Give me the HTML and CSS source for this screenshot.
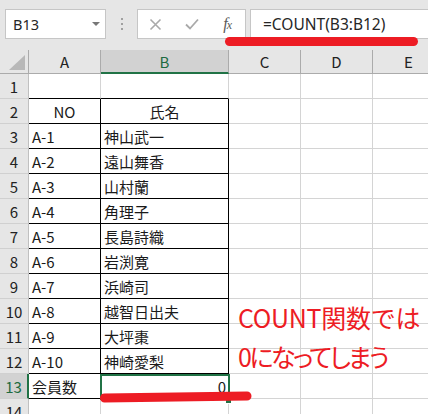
FILE: index.html
```html
<!DOCTYPE html>
<html lang="ja">
<head>
<meta charset="utf-8">
<title>COUNT</title>
<link rel="stylesheet" href="styles.css">
</head>
<body>
<div class="toolbar">
  <div class="namebox"><span>B13</span><span class="caret"></span></div>
  <div class="sep"><i></i><i></i><i></i></div>
  <div class="btns">
    <div class="slot"><svg width="13" height="13" viewBox="0 0 13 13"><path d="M1.5 1.5 L11.5 11.5 M11.5 1.5 L1.5 11.5" stroke="#a9a9a9" stroke-width="1.6" fill="none"/></svg></div>
    <div class="slot"><svg width="14" height="12" viewBox="0 0 14 12"><path d="M1 6.5 L5 10.5 L13 1.5" stroke="#a9a9a9" stroke-width="1.8" fill="none"/></svg></div>
    <div class="slot fx">f<span>x</span></div>
  </div>
  <div class="fbox">=COUNT(B3:B12)</div>
</div>
<div class="redbar"></div>

<div class="sheet">
  <div class="ch corner"><svg width="28" height="23" viewBox="0 0 28 23"><polygon points="25,5 25,20 9,20" fill="#b8b8b8"/></svg></div>
  <div class="ch">A</div><div class="ch sel">B</div><div class="ch">C</div><div class="ch">D</div><div class="ch">E</div>

  <div class="rh">1</div><div class="c bt"></div><div class="c bt"></div><div class="c"></div><div class="c"></div><div class="c"></div>
  <div class="rh">2</div><div class="c bk ctr">NO</div><div class="c bk ctr">氏名</div><div class="c"></div><div class="c"></div><div class="c"></div>
  <div class="rh">3</div><div class="c bk">A-1</div><div class="c bk">神山武一</div><div class="c"></div><div class="c"></div><div class="c"></div>
  <div class="rh">4</div><div class="c bk">A-2</div><div class="c bk">遠山舞香</div><div class="c"></div><div class="c"></div><div class="c"></div>
  <div class="rh">5</div><div class="c bk">A-3</div><div class="c bk">山村蘭</div><div class="c"></div><div class="c"></div><div class="c"></div>
  <div class="rh">6</div><div class="c bk">A-4</div><div class="c bk">角理子</div><div class="c"></div><div class="c"></div><div class="c"></div>
  <div class="rh">7</div><div class="c bk">A-5</div><div class="c bk">長島詩織</div><div class="c"></div><div class="c"></div><div class="c"></div>
  <div class="rh">8</div><div class="c bk">A-6</div><div class="c bk">岩渕寛</div><div class="c"></div><div class="c"></div><div class="c"></div>
  <div class="rh">9</div><div class="c bk">A-7</div><div class="c bk">浜崎司</div><div class="c"></div><div class="c"></div><div class="c"></div>
  <div class="rh">10</div><div class="c bk">A-8</div><div class="c bk">越智日出夫</div><div class="c"></div><div class="c"></div><div class="c"></div>
  <div class="rh">11</div><div class="c bk">A-9</div><div class="c bk">大坪棗</div><div class="c"></div><div class="c"></div><div class="c"></div>
  <div class="rh">12</div><div class="c bk">A-10</div><div class="c bk">神崎愛梨</div><div class="c"></div><div class="c"></div><div class="c"></div>
  <div class="rh sel">13</div><div class="c bk">会員数</div><div class="c bk num active">0</div><div class="c"></div><div class="c"></div><div class="c"></div>
  <div class="rh">14</div><div class="c"></div><div class="c"></div><div class="c"></div><div class="c"></div><div class="c"></div>
</div>

<div class="note">
  <div class="l1">COUNT関数では</div>
  <div class="l2">0になってしまう</div>
</div>
<svg class="mark" width="160" height="20" viewBox="0 0 160 20"><path d="M9.5 10 L152 8" stroke="#ed1c24" stroke-width="9" stroke-linecap="round" fill="none"/></svg>
</body>
</html>
```

FILE: styles.css
```css
html, body {
  margin: 0;
  padding: 0;
  background: #ffffff;
}
body {
  width: 428px;
  height: 414px;
  overflow: hidden;
  position: relative;
  font-family: "Noto Sans CJK JP", "Noto Sans", sans-serif;
}
.toolbar {
  height: 50px;
  box-sizing: border-box;
  padding-top: 9px;
  background: #e6e6e6;
  display: flex;
  align-items: flex-start;
}
.namebox {
  margin-left: 5px;
  width: 101px;
  height: 30px;
  box-sizing: border-box;
  background: #fff;
  border: 1px solid #c6c6c6;
  display: flex;
  align-items: center;
  padding-left: 7px;
  font-family: "Noto Sans", sans-serif;
  font-size: 14.5px;
  color: #262626;
}
.caret {
  margin-left: auto;
  margin-right: 5px;
  width: 0;
  height: 0;
  border-left: 4px solid transparent;
  border-right: 4px solid transparent;
  border-top: 4px solid #777;
}
.sep {
  width: 31px;
  height: 30px;
  display: flex;
  flex-direction: column;
  align-items: center;
  justify-content: center;
  gap: 3px;
}
.sep i {
  display: block;
  width: 2px;
  height: 2px;
  background: #a0a0a0;
}
.btns {
  width: 109px;
  height: 30px;
  box-sizing: border-box;
  background: #fff;
  border: 1px solid #c6c6c6;
  display: flex;
}
.slot {
  width: 36px;
  display: flex;
  align-items: center;
  justify-content: center;
}
.fx {
  font-family: "Liberation Serif", serif;
  font-style: italic;
  font-size: 16px;
  color: #5a5a5a;
  letter-spacing: -1px;
}
.fx span {
  font-size: 12px;
  position: relative;
  top: 1px;
}
.fbox {
  margin-left: 4px;
  flex: 1;
  height: 30px;
  box-sizing: border-box;
  background: #fff;
  border: 1px solid #c6c6c6;
  border-right: none;
  padding-left: 12px;
  display: flex;
  align-items: center;
  font-family: "Noto Sans", sans-serif;
  font-size: 15.5px;
  color: #262626;
}
.redbar {
  position: absolute;
  left: 225px;
  top: 37px;
  width: 193px;
  height: 9px;
  border-radius: 4.5px;
  background: #ed1c24;
}
.sheet {
  display: grid;
  grid-template-columns: 29px 72px 128px 72px 72px 72px;
  grid-template-rows: 24px;
  grid-auto-rows: 25px;
}
.sheet > div {
  box-sizing: border-box;
  display: flex;
  align-items: center;
  white-space: nowrap;
  font-size: 15px;
  line-height: 1;
}
.ch {
  background: #e6e6e6;
  border-right: 1px solid #ababab;
  border-bottom: 1px solid #ababab;
  justify-content: center;
  color: #222;
}
.ch.corner {
  align-items: stretch;
  justify-content: flex-start;
}
.ch.sel {
  background: #d2d2d2;
  border-bottom: 2px solid #217346;
  color: #1e6b40;
}
.rh {
  background: #e6e6e6;
  border-right: 1px solid #c0c0c0;
  border-bottom: 1px solid #d0d0d0;
  justify-content: center;
  color: #222;
  padding-top: 1px;
}
.rh.sel {
  background: #d2d2d2;
  border-right: 2px solid #217346;
  color: #1e6b40;
}
.c {
  border-right: 1px solid #d4d4d4;
  border-bottom: 1px solid #d4d4d4;
  padding: 1px 3px 0 3px;
  color: #1a1a1a;
}
.c.bt {
  border-bottom-color: #000;
}
.c.bk {
  border-right-color: #000;
  border-bottom-color: #000;
}
.c.ctr {
  justify-content: center;
}
.c.num {
  justify-content: flex-end;
  padding-right: 2px;
}
.c.active {
  position: relative;
}
.c.active::after {
  content: "";
  position: absolute;
  left: -1px;
  top: 0;
  width: 130px;
  height: 26px;
  box-sizing: border-box;
  border: 2px solid #217346;
  z-index: 2;
}
.c.active::before {
  content: "";
  position: absolute;
  left: 124px;
  top: 23px;
  width: 7px;
  height: 7px;
  box-sizing: border-box;
  background: #217346;
  border: 1px solid #fff;
  z-index: 3;
}
.note {
  position: absolute;
  left: 238px;
  top: 298px;
  color: #ed1c24;
  font-family: "Noto Sans CJK JP", sans-serif;
  font-size: 25px;
  line-height: 39px;
  white-space: nowrap;
  z-index: 4;
}
.note .l1 {
  letter-spacing: -0.3px;
}
.note .l2 {
  font-feature-settings: "palt";
  letter-spacing: -2.5px;
}
.mark {
  position: absolute;
  left: 95px;
  top: 388px;
  z-index: 5;
}
```
